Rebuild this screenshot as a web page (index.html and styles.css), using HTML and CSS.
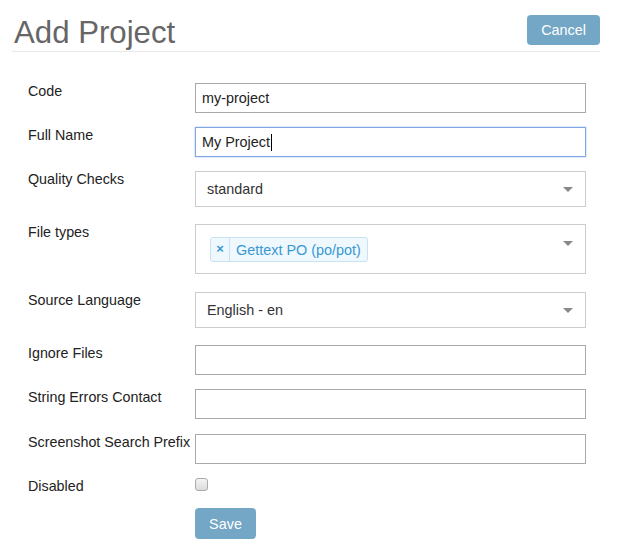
FILE: index.html
```html
<!DOCTYPE html>
<html lang="en">
<head>
<meta charset="utf-8">
<title>Add Project</title>
<link rel="stylesheet" href="styles.css">
</head>
<body>
<div class="page">
  <header class="page-header">
    <h1 class="page-title">Add Project</h1>
    <a class="btn btn-cancel" href="#">Cancel</a>
  </header>
  <form class="form">
    <div class="field">
      <label class="field-label">Code</label>
      <input class="text-input" type="text" value="my-project">
    </div>
    <div class="field">
      <label class="field-label">Full Name</label>
      <div class="text-input text-input--focus">My Project<span class="caret"></span></div>
    </div>
    <div class="field field--select">
      <label class="field-label">Quality Checks</label>
      <div class="select">standard</div>
    </div>
    <div class="field field--multi">
      <label class="field-label">File types</label>
      <div class="select select--multi">
        <span class="tag"><span class="tag-remove">×</span><span class="tag-text">Gettext PO (po/pot)</span></span>
      </div>
    </div>
    <div class="field field--select">
      <label class="field-label">Source Language</label>
      <div class="select">English - en</div>
    </div>
    <div class="field">
      <label class="field-label">Ignore Files</label>
      <input class="text-input" type="text">
    </div>
    <div class="field field--wide">
      <label class="field-label">String Errors Contact</label>
      <input class="text-input" type="text">
    </div>
    <div class="field">
      <label class="field-label">Screenshot Search Prefix</label>
      <input class="text-input" type="text">
    </div>
    <div class="field">
      <label class="field-label">Disabled</label>
      <input class="checkbox" type="checkbox">
    </div>
    <div class="field">
      <span class="field-label"></span>
      <button class="btn btn-save" type="button">Save</button>
    </div>
  </form>
</div>
</body>
</html>
```
FILE: styles.css
```css
* { box-sizing: border-box; }

body {
  margin: 0;
  background: #fff;
  font-family: "Liberation Sans", Arial, sans-serif;
  font-size: 14px;
  color: #222;
}

.page {
  padding: 0 18px 0 12px;
}

.page-header {
  display: flex;
  justify-content: space-between;
  align-items: flex-start;
  padding-top: 15px;
  border-bottom: 1px solid #e8e8e8;
}

.page-title {
  margin: 0;
  padding-left: 2px;
  font-size: 31.2px;
  line-height: 36px;
  font-weight: normal;
  color: #666;
}

.btn {
  display: inline-block;
  height: 30px;
  padding: 0 14px;
  border: 0;
  border-radius: 4px;
  background: #74a7c6;
  color: #fff;
  font-family: "Liberation Sans", Arial, sans-serif;
  font-size: 14.4px;
  line-height: 30px;
  text-decoration: none;
}

.btn-save {
  width: 61px;
  height: 31px;
  padding: 0;
  text-align: center;
}

.form {
  margin-top: 31px;
  padding-left: 16px;
}

.field {
  display: flex;
  align-items: flex-start;
  margin-bottom: 14px;
}

.field--select { margin-bottom: 17px; }
.field--multi { margin-bottom: 18px; }
.field--wide { margin-bottom: 15px; }

.field-label {
  flex: 0 0 167px;
  font-size: 14.3px;
  line-height: 16px;
  color: #222;
  white-space: nowrap;
}

.text-input {
  width: 391px;
  height: 30px;
  margin: 0;
  padding: 0 6px;
  border: 1px solid #aaa;
  border-radius: 0;
  background: #fff;
  font-family: "Liberation Sans", Arial, sans-serif;
  font-size: 14.4px;
  color: #222;
  outline: none;
}

.text-input--focus {
  display: flex;
  align-items: center;
  border-color: #7ea6e4;
  box-shadow: 0 0 2px #a9c5ef;
}

.caret {
  display: inline-block;
  width: 1px;
  height: 17px;
  margin-left: 1px;
  background: #000;
}

.select {
  position: relative;
  display: flex;
  align-items: center;
  width: 391px;
  height: 36px;
  padding: 0 11px;
  border: 1px solid #ccc;
  background: #fff;
  font-size: 14.4px;
  color: #333;
}

.select::after {
  content: "";
  position: absolute;
  right: 12px;
  top: 15px;
  border-left: 5px solid transparent;
  border-right: 5px solid transparent;
  border-top: 5px solid #888;
}

.select--multi {
  align-items: flex-start;
  height: 50px;
  padding: 12px 14px;
}

.select--multi::after {
  top: 16px;
}

.tag {
  display: inline-flex;
  align-items: center;
  height: 25px;
  border: 1px solid #c8e2f2;
  border-radius: 3px;
  background: #eff8fd;
  color: #3798d4;
  font-size: 14.4px;
}

.tag-remove {
  display: flex;
  align-items: center;
  justify-content: center;
  width: 19px;
  height: 100%;
  padding-bottom: 2px;
  border-right: 1px solid #c8e2f2;
  font-size: 13px;
  font-weight: bold;
}

.tag-text {
  padding: 0 6px;
}

.checkbox {
  -webkit-appearance: none;
  appearance: none;
  width: 13px;
  height: 13px;
  margin: 0;
  border: 1px solid #aaa;
  border-radius: 3px;
  background: linear-gradient(#f4f4f4, #dcdcdc);
}
```
